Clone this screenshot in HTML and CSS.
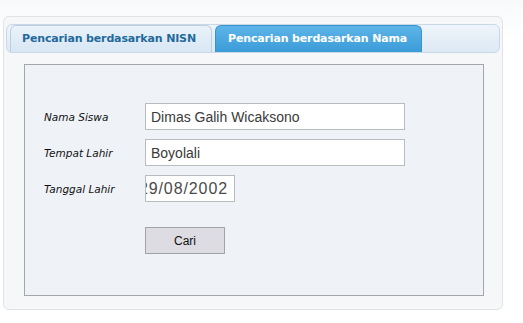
FILE: index.html
```html
<!DOCTYPE html>
<html>
<head>
<meta charset="utf-8">
<link rel="stylesheet" href="styles.css">
</head>
<body>
<div class="wrap">
  <div class="tabbar">
    <div class="tab">Pencarian berdasarkan NISN</div>
    <div class="tab active">Pencarian berdasarkan Nama</div>
  </div>
  <div class="panel">
    <div class="form">
      <div class="row">
        <label class="lbl">Nama Siswa</label>
        <input class="field wide" type="text" value="Dimas Galih Wicaksono">
      </div>
      <div class="row">
        <label class="lbl">Tempat Lahir</label>
        <input class="field wide" type="text" value="Boyolali">
      </div>
      <div class="row">
        <label class="lbl">Tanggal Lahir</label>
        <div class="field date"><span>29/08/2002</span></div>
      </div>
      <div class="row btnrow">
        <button class="btn">Cari</button>
      </div>
    </div>
  </div>
</div>
</body>
</html>
```
FILE: styles.css
```css
html, body {
  margin: 0;
  padding: 0;
  background: #ffffff;
}
body {
  width: 523px;
  height: 323px;
  background: linear-gradient(#f7f9fb, #ffffff 40px);
  padding-top: 16px;
  box-sizing: border-box;
  font-family: "DejaVu Sans", sans-serif;
}
.wrap {
  margin-left: 3px;
  width: 500px;
  height: 294px;
  box-sizing: border-box;
  border: 1px solid #dfe4e8;
  border-radius: 6px;
  background: #f5f7f9;
  padding: 7px 2px 0 2px;
}
.tabbar {
  height: 29px;
  box-sizing: border-box;
  border: 1px solid #c8d8e6;
  border-radius: 6px;
  background: linear-gradient(#eef4fa, #dde9f5);
  display: flex;
  align-items: flex-end;
  gap: 3px;
  padding-left: 3px;
}
.tab {
  height: 27px;
  box-sizing: border-box;
  border: 1px solid #bccfe0;
  border-bottom: none;
  border-radius: 6px 6px 0 0;
  background: linear-gradient(#eaf2f9, #d8e7f4);
  color: #236a9c;
  font-weight: bold;
  font-size: 11px;
  letter-spacing: -0.15px;
  line-height: 26px;
  padding: 0 0 0 11px;
  width: 202px;
  white-space: nowrap;
  overflow: hidden;
}
.tab.active {
  width: 207px;
  padding-left: 12px;
  background: linear-gradient(#5db4e8, #3b9cd8);
  border-color: #3a93cc;
  color: #ffffff;
}
.panel {
  margin: 11px 16px 0 18px;
  height: 232px;
  box-sizing: border-box;
  border: 1px solid #a4a6ac;
  background: #eff3f7;
  padding: 38px 0 0 19px;
}
.form {
  display: flex;
  flex-direction: column;
  gap: 9px;
}
.row {
  display: flex;
  align-items: center;
  height: 27px;
}
.lbl {
  width: 101px;
  font-family: "DejaVu Sans", sans-serif;
  font-style: italic;
  font-size: 10.5px;
  color: #111;
}
.field {
  height: 27px;
  box-sizing: border-box;
  border: 1px solid #b8bcc2;
  background: #ffffff;
  font-family: "Liberation Sans", sans-serif;
  font-size: 14px;
  color: #3a3a3a;
  padding: 0 5px;
  margin: 0;
  outline: none;
}
.wide {
  width: 260px;
}
.date {
  width: 90px;
  display: flex;
  align-items: center;
  justify-content: flex-end;
  overflow: hidden;
  white-space: nowrap;
  padding: 0 6px 0 0;
  font-size: 16px;
  letter-spacing: 0.9px;
  color: #4a4a4a;
}
.btnrow {
  margin-top: 16px;
  padding-left: 101px;
}
.btn {
  width: 80px;
  height: 27px;
  border: 1px solid #a2a2aa;
  background: #dcdce2;
  font-family: "Liberation Sans", sans-serif;
  font-size: 12px;
  color: #111;
  padding: 0;
  margin: 0;
  border-radius: 0;
}
```
